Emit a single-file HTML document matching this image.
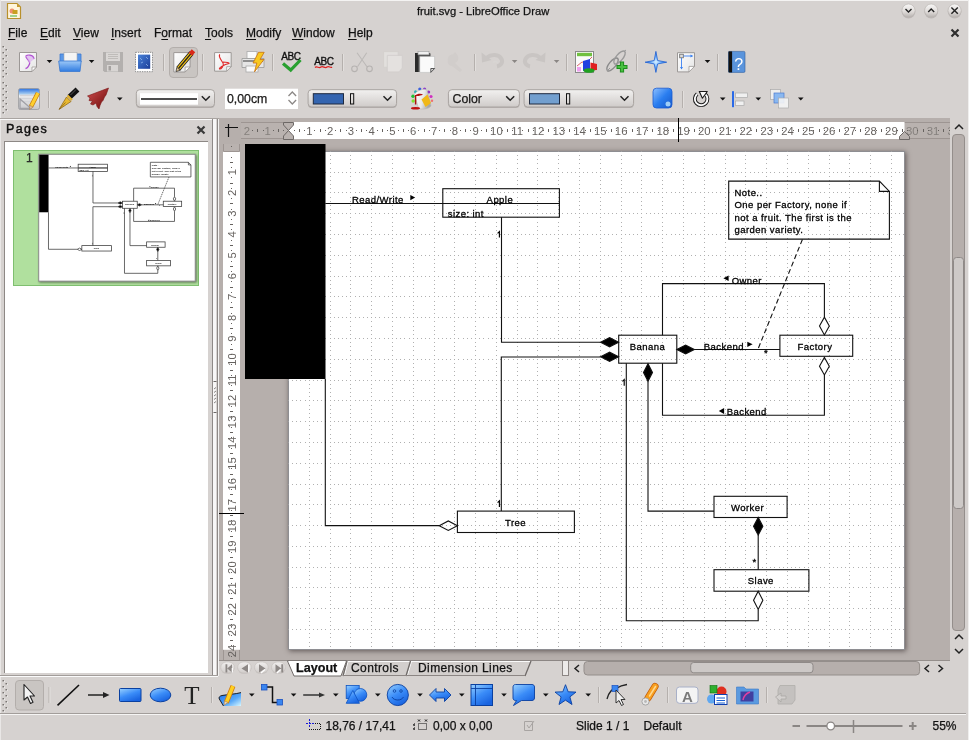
<!DOCTYPE html>
<html><head><meta charset="utf-8">
<style>
*{box-sizing:border-box;margin:0;padding:0}
html,body{width:969px;height:740px;overflow:hidden;background:#d6d2d0;font-family:"Liberation Sans",sans-serif;color:#111}
.a{position:absolute}
.t{position:absolute;white-space:pre;font-size:12px;line-height:14px;-webkit-text-stroke:0.25px #111}
.u{text-decoration:underline;text-underline-offset:2px}
svg{position:absolute;overflow:visible}
.dl{stroke-width:var(--sw,1.1px);stroke:var(--sc,#111)}
.dt{fill-opacity:var(--to,1)}
</style></head><body><div style="position:absolute;left:0;top:0;width:969px;height:740px;will-change:transform">

<div class="a" style="left:0;top:0;width:969px;height:1px;background:#f4f3f2"></div>
<div class="a" style="left:968px;top:0;width:1px;height:740px;background:#f0efee"></div>
<div class="a" style="left:0;top:0;width:1px;height:740px;background:#e9e7e6"></div>
<div class="t" style="left:417px;top:4px;font-size:11.2px">fruit.svg - LibreOffice Draw</div>
<div class="t" style="left:8px;top:26px"><span class="u">F</span>ile</div>
<div class="t" style="left:40px;top:26px"><span class="u">E</span>dit</div>
<div class="t" style="left:73px;top:26px"><span class="u">V</span>iew</div>
<div class="t" style="left:111px;top:26px"><span class="u">I</span>nsert</div>
<div class="t" style="left:154px;top:26px">F<span class="u">o</span>rmat</div>
<div class="t" style="left:205px;top:26px"><span class="u">T</span>ools</div>
<div class="t" style="left:246px;top:26px"><span class="u">M</span>odify</div>
<div class="t" style="left:292px;top:26px"><span class="u">W</span>indow</div>
<div class="t" style="left:348px;top:26px"><span class="u">H</span>elp</div>
<div class="a" style="left:0;top:118px;width:219px;height:1px;background:#a9a4a1"></div>
<div class="a" style="left:0;top:119px;width:212px;height:1px;background:#fbfbfb"></div>
<div class="t" style="left:6px;top:122px;font-size:12.5px;letter-spacing:1.3px;-webkit-text-stroke:0.45px #111">Pages</div>
<div class="a" style="left:4px;top:141px;width:204px;height:532px;background:#fff;border-top:1px solid #8d8885;border-left:1px solid #8d8885"></div>
<div class="a" style="left:13px;top:150px;width:186px;height:136px;background:#b0e09e;border:1px solid #7fbf70"></div>
<div class="t" style="left:26px;top:151px;font-size:12px;color:#333">1</div>
<div class="a" style="left:212px;top:119px;width:1px;height:557px;background:#8e8987"></div>
<div class="a" style="left:213px;top:119px;width:3px;height:557px;background:#f8f7f7"></div>
<div class="a" style="left:217px;top:119px;width:1px;height:557px;background:#8e8987"></div>
<div class="a" style="left:218px;top:119px;width:1px;height:557px;background:#f3f2f1"></div>
<div class="a" style="left:219px;top:118px;width:731px;height:542px;background:#b6afac"></div>
<div class="a" style="left:288.0px;top:150.9px;width:617.0px;height:499.4px;background:#fff;border:1px solid #8e8e92;box-shadow:1px 1px 5px rgba(40,30,30,.6)"></div>
<svg class="a" style="left:0;top:0" width="969" height="740" viewBox="0 0 969 740">
<defs><clipPath id="pg"><rect x="288.5" y="151.4" width="616.0" height="498.4"/></clipPath></defs>
<path clip-path="url(#pg)" d="M309.5 150.9V649.8 M330.5 150.9V649.8 M350.5 150.9V649.8 M371.5 150.9V649.8 M392.5 150.9V649.8 M413.5 150.9V649.8 M434.5 150.9V649.8 M454.5 150.9V649.8 M475.5 150.9V649.8 M496.5 150.9V649.8 M517.5 150.9V649.8 M537.5 150.9V649.8 M558.5 150.9V649.8 M579.5 150.9V649.8 M600.5 150.9V649.8 M621.5 150.9V649.8 M641.5 150.9V649.8 M662.5 150.9V649.8 M683.5 150.9V649.8 M704.5 150.9V649.8 M725.5 150.9V649.8 M745.5 150.9V649.8 M766.5 150.9V649.8 M787.5 150.9V649.8 M808.5 150.9V649.8 M829.5 150.9V649.8 M849.5 150.9V649.8 M870.5 150.9V649.8 M891.5 150.9V649.8 M288.0 172.5H904.5 M288.0 192.5H904.5 M288.0 213.5H904.5 M288.0 234.5H904.5 M288.0 255.5H904.5 M288.0 276.5H904.5 M288.0 296.5H904.5 M288.0 317.5H904.5 M288.0 338.5H904.5 M288.0 359.5H904.5 M288.0 380.5H904.5 M288.0 400.5H904.5 M288.0 421.5H904.5 M288.0 442.5H904.5 M288.0 463.5H904.5 M288.0 484.5H904.5 M288.0 504.5H904.5 M288.0 525.5H904.5 M288.0 546.5H904.5 M288.0 567.5H904.5 M288.0 587.5H904.5 M288.0 608.5H904.5 M288.0 629.5H904.5" stroke="#b0b0b0" stroke-width="1" stroke-dasharray="1 3.158" shape-rendering="crispEdges" fill="none"/>
</svg>
<svg class="a" style="left:0;top:0" width="969" height="740" viewBox="0 0 969 740">
<g id="diagram">
<rect x="245" y="144" width="80.5" height="235" fill="#000"/>
<path d="M325.3 203.5 L559.4 203.5" fill="none" stroke="#111" stroke-width="1.1" class="dl" />
<rect x="442.8" y="188.7" width="116.59999999999997" height="28.5" fill="none" stroke="#111" stroke-width="1.1" class="dl"/>
<path d="M442.8 203.5 L559.4 203.5" fill="none" stroke="#111" stroke-width="1.1" class="dl" />
<text x="352" y="203" font-family="Liberation Sans" font-size="9.5" letter-spacing="0.45" fill="#000" stroke="#000" stroke-width="0.3" class="dt" >Read/Write</text>
<path d="M410.3 195.0 L415.2 197.60000000000002 L410.3 200.20000000000002Z" fill="#000"/>
<text x="486.6" y="202.8" font-family="Liberation Sans" font-size="9.5" letter-spacing="0.45" fill="#000" stroke="#000" stroke-width="0.3" class="dt" >Apple</text>
<text x="447.7" y="217.2" font-family="Liberation Sans" font-size="9.5" letter-spacing="0.45" fill="#000" stroke="#000" stroke-width="0.3" class="dt" >size: int</text>
<path d="M501.5 217.2 L501.5 342.2 L600.6 342.2" fill="none" stroke="#111" stroke-width="1.1" class="dl" />
<path d="M497.6 233.3L499.4 231.6V237.6" fill="none" stroke="#000" stroke-width="1.15" class="dt"/>
<path d="M600.6 342.2 L609.6 337.59999999999997 L618.6 342.2 L609.6 346.8Z" fill="#000" stroke="#111" stroke-width="1" class="dl"/>
<path d="M501.3 511.1 L501.3 357 L600.6 357" fill="none" stroke="#111" stroke-width="1.1" class="dl" />
<path d="M600.6 356.8 L609.6 352.2 L618.6 356.8 L609.6 361.40000000000003Z" fill="#000" stroke="#111" stroke-width="1" class="dl"/>
<path d="M497.6 502.6L499.4 500.9V506.9" fill="none" stroke="#000" stroke-width="1.15" class="dt"/>
<path d="M325.3 378.9 L325.3 525.6 L439.2 525.6" fill="none" stroke="#111" stroke-width="1.1" class="dl" />
<path d="M439.2 525.7 L448.3 520.9000000000001 L457.40000000000003 525.7 L448.3 530.5Z" fill="none" stroke="#111" stroke-width="1" class="dl"/>
<rect x="457.4" y="511.1" width="117.0" height="21.399999999999977" fill="none" stroke="#111" stroke-width="1.1" class="dl"/>
<text x="505" y="525.5" font-family="Liberation Sans" font-size="9.5" letter-spacing="0.45" fill="#000" stroke="#000" stroke-width="0.3" class="dt" >Tree</text>
<path d="M662.5 335.2 L662.5 283.6 L824.4 283.6 L824.4 317.2" fill="none" stroke="#111" stroke-width="1.1" class="dl" />
<path d="M819.5 326.05 L824.4 317.2 L829.3 326.05 L824.4 334.90000000000003Z" fill="none" stroke="#111" stroke-width="1" class="dl"/>
<text x="731.7" y="283.6" font-family="Liberation Sans" font-size="9.5" letter-spacing="0.45" fill="#000" stroke="#000" stroke-width="0.3" class="dt" >Owner</text>
<path d="M728.5999999999999 275.6 L723.4 278.35 L728.5999999999999 281.09999999999997Z" fill="#000"/>
<path d="M824.4 374.9 L824.4 415.3 L662.5 415.3 L662.5 363.2" fill="none" stroke="#111" stroke-width="1.1" class="dl" />
<path d="M819.5 366.15 L824.4 357.4 L829.3 366.15 L824.4 374.9Z" fill="none" stroke="#111" stroke-width="1" class="dl"/>
<text x="726.7" y="415.3" font-family="Liberation Sans" font-size="9.5" letter-spacing="0.45" fill="#000" stroke="#000" stroke-width="0.3" class="dt" >Backend</text>
<path d="M724.0999999999999 408.1 L718.8000000000001 411.0 L724.0999999999999 413.9Z" fill="#000"/>
<path d="M694.4 349.5 L779.9 349.5" fill="none" stroke="#111" stroke-width="1.1" class="dl" />
<path d="M676.8000000000001 349.5 L685.6 345.0 L694.4 349.5 L685.6 354.0Z" fill="#000" stroke="#111" stroke-width="1" class="dl"/>
<text x="703.8" y="349.5" font-family="Liberation Sans" font-size="9.5" letter-spacing="0.45" fill="#000" stroke="#000" stroke-width="0.3" class="dt" >Backend</text>
<path d="M747.3000000000001 341.8 L752.6 344.35 L747.3000000000001 346.9Z" fill="#000"/>
<text x="764" y="356" font-family="Liberation Sans" font-size="9.5" letter-spacing="0.45" fill="#000" stroke="#000" stroke-width="0.3" class="dt" >*</text>
<path d="M728.7 181.1 L879.4 181.1 L889.4 191.4 L889.4 239.1 L728.7 239.1Z" fill="none" stroke="#111" stroke-width="1.1" class="dl"/>
<path d="M879.4 181.1 L879.4 191.4 L889.4 191.4" fill="none" stroke="#111" stroke-width="1.1" class="dl" />
<text x="734.5" y="196.0" font-family="Liberation Sans" font-size="9.5" letter-spacing="0.45" fill="#000" stroke="#000" stroke-width="0.3" class="dt" >Note..</text>
<text x="734.5" y="208.27" font-family="Liberation Sans" font-size="9.5" letter-spacing="0.45" fill="#000" stroke="#000" stroke-width="0.3" class="dt" >One per Factory, none if</text>
<text x="734.5" y="220.54" font-family="Liberation Sans" font-size="9.5" letter-spacing="0.45" fill="#000" stroke="#000" stroke-width="0.3" class="dt" >not a fruit. The first is the</text>
<text x="734.5" y="232.81" font-family="Liberation Sans" font-size="9.5" letter-spacing="0.45" fill="#000" stroke="#000" stroke-width="0.3" class="dt" >garden variety.</text>
<path d="M802.4 239.5 L757.7 349.8" fill="none" stroke="#111" stroke-width="1.1" class="dl" stroke-dasharray="5 3"/>
<rect x="618.7" y="335.2" width="58.09999999999991" height="28.0" fill="none" stroke="#111" stroke-width="1.1" class="dl"/>
<text x="629.8" y="350.2" font-family="Liberation Sans" font-size="9.5" letter-spacing="0.45" fill="#000" stroke="#000" stroke-width="0.3" class="dt" >Banana</text>
<rect x="779.9" y="335.2" width="72.80000000000007" height="21.100000000000023" fill="none" stroke="#111" stroke-width="1.1" class="dl"/>
<text x="797.6" y="349.6" font-family="Liberation Sans" font-size="9.5" letter-spacing="0.45" fill="#000" stroke="#000" stroke-width="0.3" class="dt" >Factory</text>
<path d="M626.3 363.2 L626.3 620.8 L758.2 620.8 L758.2 609.4" fill="none" stroke="#111" stroke-width="1.1" class="dl" />
<path d="M753.5500000000001 600.3 L758.2 591.1999999999999 L762.85 600.3 L758.2 609.4Z" fill="none" stroke="#111" stroke-width="1" class="dl"/>
<path d="M622.4 381.4L624.2 379.7V385.8" fill="none" stroke="#000" stroke-width="1.15" class="dt"/>
<path d="M643.5 372.45 L648 363.59999999999997 L652.5 372.45 L648 381.3Z" fill="#000" stroke="#111" stroke-width="1" class="dl"/>
<path d="M648 381.3 L648 511.1 L714 511.1" fill="none" stroke="#111" stroke-width="1.1" class="dl" />
<rect x="714" y="496.3" width="73.10000000000002" height="21.19999999999999" fill="none" stroke="#111" stroke-width="1.1" class="dl"/>
<text x="731" y="510.8" font-family="Liberation Sans" font-size="9.5" letter-spacing="0.45" fill="#000" stroke="#000" stroke-width="0.3" class="dt" >Worker</text>
<path d="M753.5500000000001 526.25 L758.2 517.5 L762.85 526.25 L758.2 535.0Z" fill="#000" stroke="#111" stroke-width="1" class="dl"/>
<path d="M758.2 535 L758.2 569.7" fill="none" stroke="#111" stroke-width="1.1" class="dl" />
<text x="752.5" y="564.5" font-family="Liberation Sans" font-size="9.5" letter-spacing="0.45" fill="#000" stroke="#000" stroke-width="0.3" class="dt" >*</text>
<rect x="714" y="569.7" width="94.89999999999998" height="21.5" fill="none" stroke="#111" stroke-width="1.1" class="dl"/>
<text x="747.8" y="584" font-family="Liberation Sans" font-size="9.5" letter-spacing="0.45" fill="#000" stroke="#000" stroke-width="0.3" class="dt" >Slave</text>
</g></svg>
<svg class="a" style="left:0;top:0" width="969" height="740" viewBox="0 0 969 740">
<defs><clipPath id="rt"><rect x="241" y="118" width="709" height="24"/></clipPath><clipPath id="rl"><rect x="219" y="144" width="24" height="516"/></clipPath></defs>
<g clip-path="url(#rt)">
<rect x="241" y="122" width="709" height="17" fill="#b9b2af"/>
<path d="M241 122.5H950M241 138.5H950" stroke="#9d9592" stroke-width="1"/>
<rect x="288.5" y="122" width="616.0" height="17" fill="#fff"/>
<text x="226.13" y="134.7" text-anchor="middle" font-family="Liberation Sans" font-size="11.3" fill="#85807d">3</text>
<text x="246.92" y="134.7" text-anchor="middle" font-family="Liberation Sans" font-size="11.3" fill="#85807d">2</text>
<text x="267.71" y="134.7" text-anchor="middle" font-family="Liberation Sans" font-size="11.3" fill="#85807d">1</text>
<text x="309.29" y="134.7" text-anchor="middle" font-family="Liberation Sans" font-size="11.3" fill="#66625f">1</text>
<text x="330.08" y="134.7" text-anchor="middle" font-family="Liberation Sans" font-size="11.3" fill="#66625f">2</text>
<text x="350.87" y="134.7" text-anchor="middle" font-family="Liberation Sans" font-size="11.3" fill="#66625f">3</text>
<text x="371.66" y="134.7" text-anchor="middle" font-family="Liberation Sans" font-size="11.3" fill="#66625f">4</text>
<text x="392.45" y="134.7" text-anchor="middle" font-family="Liberation Sans" font-size="11.3" fill="#66625f">5</text>
<text x="413.24" y="134.7" text-anchor="middle" font-family="Liberation Sans" font-size="11.3" fill="#66625f">6</text>
<text x="434.03" y="134.7" text-anchor="middle" font-family="Liberation Sans" font-size="11.3" fill="#66625f">7</text>
<text x="454.82" y="134.7" text-anchor="middle" font-family="Liberation Sans" font-size="11.3" fill="#66625f">8</text>
<text x="475.61" y="134.7" text-anchor="middle" font-family="Liberation Sans" font-size="11.3" fill="#66625f">9</text>
<text x="496.40" y="134.7" text-anchor="middle" font-family="Liberation Sans" font-size="11.3" fill="#66625f">10</text>
<text x="517.19" y="134.7" text-anchor="middle" font-family="Liberation Sans" font-size="11.3" fill="#66625f">11</text>
<text x="537.98" y="134.7" text-anchor="middle" font-family="Liberation Sans" font-size="11.3" fill="#66625f">12</text>
<text x="558.77" y="134.7" text-anchor="middle" font-family="Liberation Sans" font-size="11.3" fill="#66625f">13</text>
<text x="579.56" y="134.7" text-anchor="middle" font-family="Liberation Sans" font-size="11.3" fill="#66625f">14</text>
<text x="600.35" y="134.7" text-anchor="middle" font-family="Liberation Sans" font-size="11.3" fill="#66625f">15</text>
<text x="621.14" y="134.7" text-anchor="middle" font-family="Liberation Sans" font-size="11.3" fill="#66625f">16</text>
<text x="641.93" y="134.7" text-anchor="middle" font-family="Liberation Sans" font-size="11.3" fill="#66625f">17</text>
<text x="662.72" y="134.7" text-anchor="middle" font-family="Liberation Sans" font-size="11.3" fill="#66625f">18</text>
<text x="683.51" y="134.7" text-anchor="middle" font-family="Liberation Sans" font-size="11.3" fill="#66625f">19</text>
<text x="704.30" y="134.7" text-anchor="middle" font-family="Liberation Sans" font-size="11.3" fill="#66625f">20</text>
<text x="725.09" y="134.7" text-anchor="middle" font-family="Liberation Sans" font-size="11.3" fill="#66625f">21</text>
<text x="745.88" y="134.7" text-anchor="middle" font-family="Liberation Sans" font-size="11.3" fill="#66625f">22</text>
<text x="766.67" y="134.7" text-anchor="middle" font-family="Liberation Sans" font-size="11.3" fill="#66625f">23</text>
<text x="787.46" y="134.7" text-anchor="middle" font-family="Liberation Sans" font-size="11.3" fill="#66625f">24</text>
<text x="808.25" y="134.7" text-anchor="middle" font-family="Liberation Sans" font-size="11.3" fill="#66625f">25</text>
<text x="829.04" y="134.7" text-anchor="middle" font-family="Liberation Sans" font-size="11.3" fill="#66625f">26</text>
<text x="849.83" y="134.7" text-anchor="middle" font-family="Liberation Sans" font-size="11.3" fill="#66625f">27</text>
<text x="870.62" y="134.7" text-anchor="middle" font-family="Liberation Sans" font-size="11.3" fill="#66625f">28</text>
<text x="891.41" y="134.7" text-anchor="middle" font-family="Liberation Sans" font-size="11.3" fill="#66625f">29</text>
<text x="912.20" y="134.7" text-anchor="middle" font-family="Liberation Sans" font-size="11.3" fill="#85807d">30</text>
<text x="932.99" y="134.7" text-anchor="middle" font-family="Liberation Sans" font-size="11.3" fill="#85807d">31</text>
<text x="953.78" y="134.7" text-anchor="middle" font-family="Liberation Sans" font-size="11.3" fill="#85807d">32</text>
<text x="974.57" y="134.7" text-anchor="middle" font-family="Liberation Sans" font-size="11.3" fill="#85807d">33</text>
<path d="M237.5 128.5V131.5 M257.5 128.5V131.5 M252.5 129.5V130.5 M263.5 129.5V130.5 M278.5 128.5V131.5 M273.5 129.5V130.5 M283.5 129.5V130.5 M299.5 128.5V131.5 M294.5 129.5V130.5 M304.5 129.5V130.5 M320.5 128.5V131.5 M314.5 129.5V130.5 M325.5 129.5V130.5 M340.5 128.5V131.5 M335.5 129.5V130.5 M346.5 129.5V130.5 M361.5 128.5V131.5 M356.5 129.5V130.5 M366.5 129.5V130.5 M382.5 128.5V131.5 M377.5 129.5V130.5 M387.5 129.5V130.5 M403.5 128.5V131.5 M398.5 129.5V130.5 M408.5 129.5V130.5 M424.5 128.5V131.5 M418.5 129.5V130.5 M429.5 129.5V130.5 M444.5 128.5V131.5 M439.5 129.5V130.5 M450.5 129.5V130.5 M465.5 128.5V131.5 M460.5 129.5V130.5 M470.5 129.5V130.5 M486.5 128.5V131.5 M481.5 129.5V130.5 M491.5 129.5V130.5 M507.5 128.5V131.5 M502.5 129.5V130.5 M512.5 129.5V130.5 M528.5 128.5V131.5 M522.5 129.5V130.5 M533.5 129.5V130.5 M548.5 128.5V131.5 M543.5 129.5V130.5 M554.5 129.5V130.5 M569.5 128.5V131.5 M564.5 129.5V130.5 M574.5 129.5V130.5 M590.5 128.5V131.5 M585.5 129.5V130.5 M595.5 129.5V130.5 M611.5 128.5V131.5 M606.5 129.5V130.5 M616.5 129.5V130.5 M632.5 128.5V131.5 M626.5 129.5V130.5 M637.5 129.5V130.5 M652.5 128.5V131.5 M647.5 129.5V130.5 M658.5 129.5V130.5 M673.5 128.5V131.5 M668.5 129.5V130.5 M678.5 129.5V130.5 M694.5 128.5V131.5 M689.5 129.5V130.5 M699.5 129.5V130.5 M715.5 128.5V131.5 M709.5 129.5V130.5 M720.5 129.5V130.5 M735.5 128.5V131.5 M730.5 129.5V130.5 M741.5 129.5V130.5 M756.5 128.5V131.5 M751.5 129.5V130.5 M761.5 129.5V130.5 M777.5 128.5V131.5 M772.5 129.5V130.5 M782.5 129.5V130.5 M798.5 128.5V131.5 M793.5 129.5V130.5 M803.5 129.5V130.5 M819.5 128.5V131.5 M813.5 129.5V130.5 M824.5 129.5V130.5 M839.5 128.5V131.5 M834.5 129.5V130.5 M845.5 129.5V130.5 M860.5 128.5V131.5 M855.5 129.5V130.5 M865.5 129.5V130.5 M881.5 128.5V131.5 M876.5 129.5V130.5 M886.5 129.5V130.5 M902.5 128.5V131.5 M897.5 129.5V130.5 M907.5 129.5V130.5 M923.5 128.5V131.5 M917.5 129.5V130.5 M928.5 129.5V130.5 M943.5 128.5V131.5 M938.5 129.5V130.5 M949.5 129.5V130.5 M964.5 128.5V131.5 M959.5 129.5V130.5 M969.5 129.5V130.5 M985.5 128.5V131.5 M980.5 129.5V130.5 M990.5 129.5V130.5" stroke="#66625f" stroke-width="1" shape-rendering="crispEdges"/>
</g>
<path d="M283.5 122.5H293.5V125L288.5 130.5L293.5 136V139.5H283.5V136L288.5 130.5L283.5 125Z" fill="#b9b2af" stroke="#6d6866" stroke-width="1"/>
<path d="M904.5 131.5L909.5 136.5V139.5H899.5V136.5Z" fill="#b9b2af" stroke="#6d6866" stroke-width="1"/>
<path d="M678.5 118V142" stroke="#000" stroke-width="1"/>
<g clip-path="url(#rl)">
<rect x="223" y="144" width="17" height="516" fill="#b9b2af"/>
<path d="M223.5 144V660M239.5 144V660" stroke="#9d9592" stroke-width="1"/>
<rect x="223" y="151.4" width="17" height="498.4" fill="#fff"/>
<text transform="translate(235.6 130.38) rotate(-90)" x="0" y="0" text-anchor="middle" font-family="Liberation Sans" font-size="11.3" fill="#66625f">1</text>
<text transform="translate(235.6 172.02) rotate(-90)" x="0" y="0" text-anchor="middle" font-family="Liberation Sans" font-size="11.3" fill="#66625f">1</text>
<text transform="translate(235.6 192.84) rotate(-90)" x="0" y="0" text-anchor="middle" font-family="Liberation Sans" font-size="11.3" fill="#66625f">2</text>
<text transform="translate(235.6 213.66) rotate(-90)" x="0" y="0" text-anchor="middle" font-family="Liberation Sans" font-size="11.3" fill="#66625f">3</text>
<text transform="translate(235.6 234.48) rotate(-90)" x="0" y="0" text-anchor="middle" font-family="Liberation Sans" font-size="11.3" fill="#66625f">4</text>
<text transform="translate(235.6 255.30) rotate(-90)" x="0" y="0" text-anchor="middle" font-family="Liberation Sans" font-size="11.3" fill="#66625f">5</text>
<text transform="translate(235.6 276.12) rotate(-90)" x="0" y="0" text-anchor="middle" font-family="Liberation Sans" font-size="11.3" fill="#66625f">6</text>
<text transform="translate(235.6 296.94) rotate(-90)" x="0" y="0" text-anchor="middle" font-family="Liberation Sans" font-size="11.3" fill="#66625f">7</text>
<text transform="translate(235.6 317.76) rotate(-90)" x="0" y="0" text-anchor="middle" font-family="Liberation Sans" font-size="11.3" fill="#66625f">8</text>
<text transform="translate(235.6 338.58) rotate(-90)" x="0" y="0" text-anchor="middle" font-family="Liberation Sans" font-size="11.3" fill="#66625f">9</text>
<text transform="translate(235.6 359.40) rotate(-90)" x="0" y="0" text-anchor="middle" font-family="Liberation Sans" font-size="11.3" fill="#66625f">10</text>
<text transform="translate(235.6 380.22) rotate(-90)" x="0" y="0" text-anchor="middle" font-family="Liberation Sans" font-size="11.3" fill="#66625f">11</text>
<text transform="translate(235.6 401.04) rotate(-90)" x="0" y="0" text-anchor="middle" font-family="Liberation Sans" font-size="11.3" fill="#66625f">12</text>
<text transform="translate(235.6 421.86) rotate(-90)" x="0" y="0" text-anchor="middle" font-family="Liberation Sans" font-size="11.3" fill="#66625f">13</text>
<text transform="translate(235.6 442.68) rotate(-90)" x="0" y="0" text-anchor="middle" font-family="Liberation Sans" font-size="11.3" fill="#66625f">14</text>
<text transform="translate(235.6 463.50) rotate(-90)" x="0" y="0" text-anchor="middle" font-family="Liberation Sans" font-size="11.3" fill="#66625f">15</text>
<text transform="translate(235.6 484.32) rotate(-90)" x="0" y="0" text-anchor="middle" font-family="Liberation Sans" font-size="11.3" fill="#66625f">16</text>
<text transform="translate(235.6 505.14) rotate(-90)" x="0" y="0" text-anchor="middle" font-family="Liberation Sans" font-size="11.3" fill="#66625f">17</text>
<text transform="translate(235.6 525.96) rotate(-90)" x="0" y="0" text-anchor="middle" font-family="Liberation Sans" font-size="11.3" fill="#66625f">18</text>
<text transform="translate(235.6 546.78) rotate(-90)" x="0" y="0" text-anchor="middle" font-family="Liberation Sans" font-size="11.3" fill="#66625f">19</text>
<text transform="translate(235.6 567.60) rotate(-90)" x="0" y="0" text-anchor="middle" font-family="Liberation Sans" font-size="11.3" fill="#66625f">20</text>
<text transform="translate(235.6 588.42) rotate(-90)" x="0" y="0" text-anchor="middle" font-family="Liberation Sans" font-size="11.3" fill="#66625f">21</text>
<text transform="translate(235.6 609.24) rotate(-90)" x="0" y="0" text-anchor="middle" font-family="Liberation Sans" font-size="11.3" fill="#66625f">22</text>
<text transform="translate(235.6 630.06) rotate(-90)" x="0" y="0" text-anchor="middle" font-family="Liberation Sans" font-size="11.3" fill="#66625f">23</text>
<text transform="translate(235.6 650.88) rotate(-90)" x="0" y="0" text-anchor="middle" font-family="Liberation Sans" font-size="11.3" fill="#66625f">24</text>
<text transform="translate(235.6 671.70) rotate(-90)" x="0" y="0" text-anchor="middle" font-family="Liberation Sans" font-size="11.3" fill="#66625f">25</text>
<text transform="translate(235.6 692.52) rotate(-90)" x="0" y="0" text-anchor="middle" font-family="Liberation Sans" font-size="11.3" fill="#66625f">26</text>
<path d="M230 141.5H233 M231 136.5H232 M231 146.5H232 M230 162.5H233 M231 157.5H232 M231 167.5H232 M230 183.5H233 M231 177.5H232 M231 188.5H232 M230 203.5H233 M231 198.5H232 M231 209.5H232 M230 224.5H233 M231 219.5H232 M231 229.5H232 M230 245.5H233 M231 240.5H232 M231 250.5H232 M230 266.5H233 M231 261.5H232 M231 271.5H232 M230 287.5H233 M231 281.5H232 M231 292.5H232 M230 307.5H233 M231 302.5H232 M231 313.5H232 M230 328.5H233 M231 323.5H232 M231 333.5H232 M230 349.5H233 M231 344.5H232 M231 354.5H232 M230 370.5H233 M231 364.5H232 M231 375.5H232 M230 390.5H233 M231 385.5H232 M231 396.5H232 M230 411.5H233 M231 406.5H232 M231 416.5H232 M230 432.5H233 M231 427.5H232 M231 437.5H232 M230 453.5H233 M231 448.5H232 M231 458.5H232 M230 474.5H233 M231 468.5H232 M231 479.5H232 M230 494.5H233 M231 489.5H232 M231 500.5H232 M230 515.5H233 M231 510.5H232 M231 520.5H232 M230 536.5H233 M231 531.5H232 M231 541.5H232 M230 557.5H233 M231 552.5H232 M231 562.5H232 M230 578.5H233 M231 572.5H232 M231 583.5H232 M230 598.5H233 M231 593.5H232 M231 604.5H232 M230 619.5H233 M231 614.5H232 M231 624.5H232 M230 640.5H233 M231 635.5H232 M231 645.5H232 M230 661.5H233 M231 656.5H232 M231 666.5H232 M230 682.5H233 M231 676.5H232 M231 687.5H232 M230 702.5H233 M231 697.5H232 M231 708.5H232" stroke="#66625f" stroke-width="1" shape-rendering="crispEdges"/>
</g>
<path d="M223.5 144V151.5H239.5V144" fill="none" stroke="#9d9592" stroke-width="1"/>
<path d="M219 513.5H244" stroke="#000" stroke-width="1"/>
</svg>
<svg class="a" style="left:0;top:0" width="969" height="740" viewBox="0 0 969 740">
<rect x="950" y="118" width="17" height="542" fill="#d6d2d0"/>
<path d="M955 129L959 125L963 129" fill="none" stroke="#222" stroke-width="1.5"/>
<rect x="952.5" y="134.5" width="12" height="496" rx="3.5" fill="#b6afac" stroke="#948e8b" stroke-width="1"/>
<rect x="953.5" y="257.5" width="10" height="251" rx="3" fill="#cdc9c7" stroke="#8f8a88" stroke-width="1"/>
<path d="M955 639L959 635L963 639M955 649L959 653L963 649" fill="none" stroke="#222" stroke-width="1.5"/>
<path d="M219 660.5H950" stroke="#958f8c" stroke-width="1"/>
<defs><linearGradient id="gnav" x1="0" y1="0" x2="0" y2="1"><stop offset="0" stop-color="#f0eeed"/><stop offset="1" stop-color="#d2cecc"/></linearGradient></defs>
<rect x="220.8" y="662.6" width="13.6" height="11.2" rx="5.5" fill="#bdb8b5" opacity=".6"/>
<rect x="220.8" y="662" width="13.6" height="10.9" rx="5.5" fill="url(#gnav)" stroke="#c4bfbc" stroke-width="0.6"/>
<rect x="237.7" y="662.6" width="13.6" height="11.2" rx="5.5" fill="#bdb8b5" opacity=".6"/>
<rect x="237.7" y="662" width="13.6" height="10.9" rx="5.5" fill="url(#gnav)" stroke="#c4bfbc" stroke-width="0.6"/>
<rect x="254.6" y="662.6" width="13.6" height="11.2" rx="5.5" fill="#bdb8b5" opacity=".6"/>
<rect x="254.6" y="662" width="13.6" height="10.9" rx="5.5" fill="url(#gnav)" stroke="#c4bfbc" stroke-width="0.6"/>
<rect x="271.6" y="662.6" width="13.6" height="11.2" rx="5.5" fill="#bdb8b5" opacity=".6"/>
<rect x="271.6" y="662" width="13.6" height="10.9" rx="5.5" fill="url(#gnav)" stroke="#c4bfbc" stroke-width="0.6"/>
<path d="M225.5 664.3H227.3V672.5H225.5Z M232 664.3L227.3 668.4L232 672.5Z" fill="#8d8886"/><path d="M232.3 668V672.5" stroke="#fff" stroke-width="1.2"/>
<path d="M248 664.3L241.5 668.4L248 672.5Z" fill="#8d8886"/><path d="M248.8 665V672.5" stroke="#fff" stroke-width="1.2"/>
<path d="M259 664.3L265.5 668.4L259 672.5Z" fill="#8d8886"/><path d="M265 669.5L261 673" stroke="#fff" stroke-width="1.2"/>
<path d="M275.5 664.3L281.3 668.4L275.5 672.5Z M281.3 664.3H283.2V672.5H281.3Z" fill="#8d8886"/><path d="M280.5 669.5L277 673" stroke="#fff" stroke-width="1.2"/>
<path d="M287 660.5H570" stroke="#8c8684" stroke-width="1"/>
<path d="M343.5 661L347 661L410.5 661L406 676L343 676Z" fill="#d3cfcd"/>
<path d="M406 661L531 661L525 676L402 676Z" fill="#d3cfcd"/>
<path d="M347.5 661.5H410M410.5 661.5H531" stroke="#fafafa" stroke-width="1"/>
<path d="M348 661.5L344.5 675M411.5 661.5L407.5 675" stroke="#fafafa" stroke-width="1"/><path d="M347 661L343 676M410.5 661L406 676M531 661L525 676" stroke="#6f6a68" stroke-width="1.3"/>
<path d="M343 675.5H525" stroke="#8c8684" stroke-width="1"/>
<path d="M287.5 661L294 676H341L346.5 661Z" fill="#fff" stroke="#6f6a68" stroke-width="1"/>
<path d="M288.5 661.6H345.5" stroke="#fff" stroke-width="1.2"/>
<rect x="562.5" y="660.5" width="6" height="15" fill="#eceae9" stroke="#8c8684" stroke-width="1"/>
<path d="M579 665L575 668.5L579 672" fill="none" stroke="#222" stroke-width="1.5"/>
<rect x="584" y="661.5" width="335.6" height="13.5" rx="3.5" fill="#b6afac" stroke="#948e8b" stroke-width="1"/>
<rect x="690.7" y="662.5" width="122.3" height="10.3" rx="3" fill="#cdc9c7" stroke="#8f8a88" stroke-width="1"/>
<path d="M929 665L925 668.5L929 672M938.5 665L942.5 668.5L938.5 672" fill="none" stroke="#222" stroke-width="1.5"/>
<path d="M0 675.5H218" stroke="#a29d9a" stroke-width="1"/>
<path d="M0 676.5H218" stroke="#fbfbfb" stroke-width="1"/>
<path d="M0 713.5H966" stroke="#a29d9a" stroke-width="1"/><path d="M0 714.5H966" stroke="#f6f5f4" stroke-width="1"/>
</svg>
<div class="t" style="left:296px;top:661px;font-size:12.6px;font-weight:bold;color:#111">Layout</div>
<div class="t" style="left:351px;top:661px;font-size:12px;letter-spacing:0.4px">Controls</div>
<div class="t" style="left:418px;top:661px;font-size:12px;letter-spacing:0.4px">Dimension Lines</div>
<div class="t" style="left:325.5px;top:719px">18,76 / 17,41</div>
<div class="t" style="left:433px;top:719px">0,00 x 0,00</div>
<div class="t" style="left:576px;top:719px">Slide 1 / 1</div>
<div class="t" style="left:643.5px;top:719px">Default</div>
<div class="t" style="left:932.5px;top:719px">55%</div>
<svg class="a" style="left:0;top:0" width="969" height="740" viewBox="0 0 969 740">
<path d="M309.5 719V728M306 723.5H314" stroke="#1a1ad8" stroke-width="1" stroke-dasharray="2 1"/>
<path d="M315 723.5H320.5V729.5H309" fill="none" stroke="#111" stroke-width="1" stroke-dasharray="1 1"/>
<path d="M418.5 723.5H426.5V729.5H418.5Z" fill="none" stroke="#111" stroke-width="1" stroke-dasharray="1 1"/>
<path d="M418 719.5L420 721.5M420 719.5L418 721.5M425 719.5L427 721.5M427 719.5L425 721.5M414.5 723.5L413.5 725L414.5 726M414.5 727.5L413.5 729L414.5 730" stroke="#111" stroke-width="1"/>
<path d="M524.5 721.5H532.5V730.5H524.5Z" fill="none" stroke="#a8a4a2" stroke-width="1"/><path d="M527 725L529 728L534 721" fill="none" stroke="#a8a4a2" stroke-width="1"/>
<path d="M792.5 726H800" stroke="#8a8684" stroke-width="2"/>
<path d="M806.5 726H902.5" stroke="#8a8684" stroke-width="2"/>
<path d="M853.5 720V733" stroke="#8a8684" stroke-width="1.5"/>
<circle cx="830.7" cy="726" r="3.8" fill="#fff" stroke="#8a8684" stroke-width="1.3"/>
<path d="M909 726H916.5M912.7 722V730" stroke="#8a8684" stroke-width="2"/>
</svg>
<svg class="a" style="left:0;top:0" width="969" height="740" viewBox="0 0 969 740">
<defs><clipPath id="tc"><rect x="39.2" y="154.8" width="155.54" height="125.84599999999999"/></clipPath></defs>
<rect x="38.7" y="154.3" width="156.54" height="126.84599999999999" fill="#fff" stroke="#8a8a8a" stroke-width="1" style="filter:drop-shadow(1px 1px 1px rgba(0,0,0,.45))"/>
<g clip-path="url(#tc)"><g transform="translate(39.2 154.8) scale(0.2525) translate(-288.5 -151.4)" ><use href="#diagram" style="--sw:3.0px;--to:0.6;--sc:#3a3a3a"/></g></g>
</svg>
<svg class="a" style="left:0;top:0" width="969" height="740" viewBox="0 0 969 740">
<defs>
<linearGradient id="gpage" x1="0" y1="0" x2="1" y2="1"><stop offset="0" stop-color="#fff"/><stop offset="1" stop-color="#e4e4e4"/></linearGradient>
<linearGradient id="gblue" x1="0" y1="0" x2="0" y2="1"><stop offset="0" stop-color="#9cc8f8"/><stop offset="1" stop-color="#2f7be0"/></linearGradient>
<linearGradient id="gblue2" x1="0" y1="0" x2="1" y2="1"><stop offset="0" stop-color="#8ec0ff"/><stop offset="0.5" stop-color="#2a7ef0"/><stop offset="1" stop-color="#1657c8"/></linearGradient>
<linearGradient id="gstamp" x1="0" y1="0" x2="1" y2="1"><stop offset="0" stop-color="#4a82d8"/><stop offset="1" stop-color="#1a3c98"/></linearGradient>
<linearGradient id="gbtn" x1="0" y1="0" x2="0" y2="1"><stop offset="0" stop-color="#f2f1f0"/><stop offset="1" stop-color="#cfcbc9"/></linearGradient>
<linearGradient id="gwin" x1="0" y1="0" x2="0" y2="1"><stop offset="0" stop-color="#f8f7f6"/><stop offset="0.6" stop-color="#dedad8"/><stop offset="1" stop-color="#b8b3b0"/></linearGradient>
</defs>
<path d="M7.5 3.5H17L20.5 7V18.5H7.5Z" fill="#fff5dc" stroke="#b8902c" stroke-width="1.2"/>
<path d="M17 3.5V7H20.5" fill="#c89a30"/>
<circle cx="12" cy="11" r="2.5" fill="#f09070"/><rect x="12.5" y="10" width="5" height="4" fill="#c8a020"/><path d="M10 16H17" stroke="#40b040" stroke-width="1"/>
<circle cx="908.5" cy="11.6" r="6.8" fill="#a8a3a0" opacity=".55"/><circle cx="908.5" cy="10.6" r="6.6" fill="url(#gwin)" stroke="#b8b3b0" stroke-width="0.6"/>
<path d="M905.5 9.1L908.5 12.1L911.5 9.1" fill="none" stroke="#222" stroke-width="1.4"/>
<circle cx="931.2" cy="11.6" r="6.8" fill="#a8a3a0" opacity=".55"/><circle cx="931.2" cy="10.6" r="6.6" fill="url(#gwin)" stroke="#b8b3b0" stroke-width="0.6"/>
<path d="M928.2 12.1L931.2 9.1L934.2 12.1" fill="none" stroke="#222" stroke-width="1.4"/>
<circle cx="954.6" cy="11.6" r="6.8" fill="#a8a3a0" opacity=".55"/><circle cx="954.6" cy="10.6" r="6.6" fill="url(#gwin)" stroke="#b8b3b0" stroke-width="0.6"/>
<path d="M951.4 7.3999999999999995L957.8000000000001 13.8M957.8000000000001 7.3999999999999995L951.4 13.8" fill="none" stroke="#222" stroke-width="1.4"/>
<path d="M951.5 29.5L958.5 36.5M958.5 29.5L951.5 36.5" stroke="#2e2e2e" stroke-width="2.2"/>
<rect x="3.3" y="46.8" width="1.3" height="1.3" fill="#fbfbfb"/><rect x="2.5" y="46" width="1.5" height="1.5" fill="#77726f"/><rect x="6.3" y="49.8" width="1.3" height="1.3" fill="#fbfbfb"/><rect x="5.5" y="49" width="1.5" height="1.5" fill="#77726f"/><rect x="3.3" y="52.8" width="1.3" height="1.3" fill="#fbfbfb"/><rect x="2.5" y="52" width="1.5" height="1.5" fill="#77726f"/><rect x="6.3" y="55.8" width="1.3" height="1.3" fill="#fbfbfb"/><rect x="5.5" y="55" width="1.5" height="1.5" fill="#77726f"/><rect x="3.3" y="58.8" width="1.3" height="1.3" fill="#fbfbfb"/><rect x="2.5" y="58" width="1.5" height="1.5" fill="#77726f"/><rect x="6.3" y="61.8" width="1.3" height="1.3" fill="#fbfbfb"/><rect x="5.5" y="61" width="1.5" height="1.5" fill="#77726f"/><rect x="3.3" y="64.8" width="1.3" height="1.3" fill="#fbfbfb"/><rect x="2.5" y="64" width="1.5" height="1.5" fill="#77726f"/><rect x="6.3" y="67.8" width="1.3" height="1.3" fill="#fbfbfb"/><rect x="5.5" y="67" width="1.5" height="1.5" fill="#77726f"/><rect x="3.3" y="70.8" width="1.3" height="1.3" fill="#fbfbfb"/><rect x="2.5" y="70" width="1.5" height="1.5" fill="#77726f"/><rect x="6.3" y="73.8" width="1.3" height="1.3" fill="#fbfbfb"/><rect x="5.5" y="73" width="1.5" height="1.5" fill="#77726f"/><rect x="3.3" y="76.8" width="1.3" height="1.3" fill="#fbfbfb"/><rect x="2.5" y="76" width="1.5" height="1.5" fill="#77726f"/>
<path d="M19.5 52.5H36.5V67L32 71.5H19.5Z" fill="url(#gpage)" stroke="#9c9896" stroke-width="1"/><path d="M36.5 67L32 67L32 71.5Z" fill="#fff" stroke="#9c9896" stroke-width="0.8"/>
<path d="M34 59C33 54 27 55 26 56C25 58 31 61 29.5 64C28.5 66.5 26.5 68.5 25.5 68.5" fill="none" stroke="#b050d0" stroke-width="1.3"/><path d="M26 56C28 55 33 55 34 59L29.5 63Z" fill="#dcb0f0" opacity=".7"/>
<path d="M46.7 60H52.300000000000004L49.5 63Z" fill="#111"/>
<path d="M60 54H81V62H60Z" fill="#5a98e8" stroke="#3c7ad0" stroke-width="0.8"/>
<rect x="64" y="52.5" width="13" height="9" fill="#f4f4f4" stroke="#aaa" stroke-width="0.6"/>
<path d="M58.7 61H81.2L80 71.5H60Z" fill="url(#gblue)" stroke="#3a78d0" stroke-width="0.8"/>
<path d="M88.8 60H94.39999999999999L91.6 63Z" fill="#111"/>
<path d="M103 52H123V72H104.5L103 70.5Z" fill="#b3b0ae"/><rect x="106" y="52.5" width="14" height="8.5" fill="#dad7d5"/><path d="M108 54.5H118M108 56.5H118M108 58.5H118" stroke="#b3b0ae" stroke-width="0.7"/><rect x="107" y="65" width="11" height="6.5" fill="#d8d5d3"/><rect x="108.5" y="66" width="2.5" height="4.5" fill="#a5a2a0"/>
<rect x="135.5" y="52.3" width="17" height="19.4" fill="#fff" stroke="#8a8a8a" stroke-width="1" stroke-dasharray="1.4 1"/>
<rect x="138" y="54.6" width="12.2" height="14.2" fill="url(#gstamp)"/>
<path d="M140 58L142 60M146 57L148 59M141 63L143 62M146 64L148 66" stroke="#9cc0f0" stroke-width="0.7"/>
<path d="M163.5 54V71" stroke="#b5b0ad" stroke-width="1"/><path d="M164.5 54V71" stroke="#e2dfdd" stroke-width="1"/>
<rect x="169.5" y="47.5" width="28" height="30" rx="3.5" fill="#c9c5c2" stroke="#b3aeab" stroke-width="1"/>
<path d="M173.8 52.6H190.1V67.0L185.1 72.0H173.8Z" fill="url(#gpage)" stroke="#9c9896" stroke-width="1"/><path d="M190.1 67.0L185.1 67.0L185.1 72.0Z" fill="#fff" stroke="#9c9896" stroke-width="0.8"/>
<path d="M178.5 68.5L191.5 53" stroke="#1a1a1a" stroke-width="5.2"/><path d="M178.5 68.5L191.5 53" stroke="#f2c31a" stroke-width="3.6"/><path d="M178.5 68.5L191.5 53" stroke="#222" stroke-width="1.2"/><path d="M190.5 54.2L193.5 50.8" stroke="#d82818" stroke-width="4.6"/><path d="M176 71.5L176.8 67.3L180.3 70.3Z" fill="#e8c890" stroke="#333" stroke-width="0.8"/>
<path d="M202.5 54V71" stroke="#b5b0ad" stroke-width="1"/><path d="M203.5 54V71" stroke="#e2dfdd" stroke-width="1"/>
<path d="M214.6 52.6H231.2V66.7L226.7 71.2H214.6Z" fill="url(#gpage)" stroke="#9c9896" stroke-width="1"/><path d="M231.2 66.7L226.7 66.7L226.7 71.2Z" fill="#fff" stroke="#9c9896" stroke-width="0.8"/>
<path d="M220 54.5C218 55.5 221 60 223 63C224.5 65.5 221 69.5 219.5 69C218.5 68 224 64.5 229 63.5C229.5 63 226.5 62 223 62" fill="none" stroke="#e02828" stroke-width="1.1"/>
<rect x="247" y="51.5" width="10" height="7" fill="#fafafa" stroke="#aaa" stroke-width="0.8"/>
<path d="M242 58.5H264V67.5H242Z" fill="#e6e6e6" stroke="#999" stroke-width="0.8"/><path d="M243 61H263" stroke="#555" stroke-width="1.2"/>
<rect x="246" y="66" width="12" height="6" fill="#fafafa" stroke="#aaa" stroke-width="0.8"/>
<path d="M258.5 52.3H264.2L260 59.5H264L254.5 71.8L256.8 63H253L258.5 52.3Z" fill="#f8c820" stroke="#c87010" stroke-width="0.8" stroke-linejoin="round"/>
<path d="M272.5 54V71" stroke="#b5b0ad" stroke-width="1"/><path d="M273.5 54V71" stroke="#e2dfdd" stroke-width="1"/>
<text x="281.2" y="59.5" font-family="Liberation Sans" font-size="10" fill="#111" stroke="#111" stroke-width="0.35" letter-spacing="-0.4">ABC</text>
<path d="M283 63.5L290.7 70L300.5 60" fill="none" stroke="#28a030" stroke-width="3.2"/>
<text x="314.3" y="64.5" font-family="Liberation Sans" font-size="10" fill="#111" stroke="#111" stroke-width="0.35" letter-spacing="-0.4">ABC</text>
<path d="M315 67.5C317 65.5 319 69 321 67C323 65.5 325 69 327 67C329 65.5 330.5 68.5 332 67" fill="none" stroke="#e02020" stroke-width="1.2"/>
<path d="M342.5 54V71" stroke="#b5b0ad" stroke-width="1"/><path d="M343.5 54V71" stroke="#e2dfdd" stroke-width="1"/>
<path d="M357 52.8L367 66.7M366.7 52.8L357.5 66.7" stroke="#bcb9b7" stroke-width="1.1"/><circle cx="354.5" cy="68.8" r="2.8" fill="none" stroke="#b5b2b0" stroke-width="1.1"/><circle cx="369.5" cy="68.8" r="2.8" fill="none" stroke="#b5b2b0" stroke-width="1.1"/>
<rect x="383.7" y="51.7" width="14.4" height="15.5" fill="#e2dfdd" stroke="#d2cfcd" stroke-width="0.8"/>
<path d="M387.3 55.4H402.3V68L399 71.9H387.3Z" fill="#e4e1df" stroke="#d0cdcb" stroke-width="0.8"/>
<rect x="415" y="53" width="15.5" height="19" rx="1" fill="#4a4a4a"/><rect x="415" y="53" width="3" height="19" fill="#2a2a2a"/>
<rect x="418" y="51.3" width="11" height="3.5" fill="#f0f0f0" stroke="#999" stroke-width="0.6"/>
<path d="M419.8 56.4H434.6V68.5L430.8 72.4H419.8Z" fill="#fafafa" stroke="#bbb" stroke-width="0.6"/><path d="M434.6 68.5L430.8 68.5L430.8 72.4Z" fill="#ddd" stroke="#333" stroke-width="0.8"/>
<path d="M448 60C447 57 451 54 453 54.5L455 52L458 56C459 60 457 62 455 63L462 70L460 72L452 66C449 66 447 63 448 60Z" fill="#d0ccca" opacity=".9"/>
<path d="M474.5 54V71" stroke="#b5b0ad" stroke-width="1"/><path d="M475.5 54V71" stroke="#e2dfdd" stroke-width="1"/>
<path d="M487 57.5C491 54 499 54 501.5 59C503.5 63 500 66 497 66.5" fill="none" stroke="#c9c5c3" stroke-width="4"/><path d="M481.5 52.5L482 62.5L491.5 60Z" fill="#c9c5c3"/><path d="M493 62.5C494.5 61 497 61 497.5 63" fill="none" stroke="#d8d5d3" stroke-width="1.5"/>
<path d="M511.8 60.1H517.4L514.6 63.1Z" fill="#8a8684"/>
<path d="M540 57.5C536 54 528 54 525.5 59C523.5 63 527 66 530 66.5" fill="none" stroke="#c9c5c3" stroke-width="4"/><path d="M545.5 52.5L545 62.5L535.5 60Z" fill="#c9c5c3"/>
<path d="M553.8 60.1H559.4L556.5999999999999 63.1Z" fill="#8a8684"/>
<path d="M566.5 54V71" stroke="#b5b0ad" stroke-width="1"/><path d="M567.5 54V71" stroke="#e2dfdd" stroke-width="1"/>
<rect x="575.5" y="51.5" width="18" height="21" fill="#fafafa" stroke="#8a8a8a" stroke-width="1"/><rect x="577" y="52.8" width="15" height="3.4" fill="#70c040"/>
<path d="M577 66L582 62L586 63L592 57" fill="none" stroke="#d04040" stroke-width="0.8"/><rect x="577" y="67" width="4" height="4.5" fill="#f0a0f0"/>
<path d="M583 61L590 59V69L583 71Z" fill="#2040e0"/><path d="M590.5 62.5L597 64V70L590.5 70.5Z" fill="#e02020"/><ellipse cx="589" cy="70.5" rx="5.5" ry="2.3" fill="#20a020"/>
<ellipse cx="0" cy="0" rx="3.3" ry="8" transform="translate(612.5 64.5) rotate(40)" fill="none" stroke="#8a8a8a" stroke-width="1.4"/><ellipse cx="0" cy="0" rx="3.3" ry="8" transform="translate(619.5 57.5) rotate(40)" fill="none" stroke="#9a9a9a" stroke-width="1.4"/><path d="M607 71L610 68M624 51.5L626 50" stroke="#999" stroke-width="1"/>
<path d="M622 61.5V72.5M616.5 67H627.5" stroke="#1e8c1e" stroke-width="4.2"/><path d="M622 62.5V71.5M617.5 67H626.5" stroke="#48c040" stroke-width="2.2"/>
<path d="M636.5 54V71" stroke="#b5b0ad" stroke-width="1"/><path d="M637.5 54V71" stroke="#e2dfdd" stroke-width="1"/>
<defs><radialGradient id="gstar" cx="0.5" cy="0.5" r="0.5"><stop offset="0" stop-color="#d8f0ff"/><stop offset="0.5" stop-color="#6ab0ff"/><stop offset="1" stop-color="#2a70e8"/></radialGradient></defs><path d="M655.9 51.4L657.6 60.5L666.7 62.2L657.6 63.9L655.9 72.4L654.2 63.9L645.1 62.2L654.2 60.5Z" fill="url(#gstar)" stroke="#2060d0" stroke-width="0.8"/>
<path d="M677.5 52.7H694.5V66.4L689 71.9H677.5Z" fill="url(#gpage)" stroke="#9c9896" stroke-width="1"/><path d="M694.5 66.4L689 66.4L689 71.9Z" fill="#fff" stroke="#9c9896" stroke-width="0.8"/>
<rect x="679.7" y="54.2" width="3.6" height="3.6" fill="#ddd" stroke="#666" stroke-width="0.8"/><path d="M683.5 56H692.5M681.5 58V69" stroke="#3a80f0" stroke-width="0.9"/><path d="M693 56L690.5 54.5V57.5Z M681.5 69.5L680 67H683Z" fill="#3a80f0"/>
<path d="M704.7 59.9H710.3000000000001L707.5 62.9Z" fill="#111"/>
<path d="M717.5 54V71" stroke="#b5b0ad" stroke-width="1"/><path d="M718.5 54V71" stroke="#e2dfdd" stroke-width="1"/>
<rect x="728.5" y="51.4" width="16.5" height="21" rx="1.2" fill="#5a94dc" stroke="#3060a0" stroke-width="0.6"/><rect x="728.5" y="51.4" width="3.6" height="21" fill="#111"/>
<text x="738.8" y="70" text-anchor="middle" font-family="Liberation Sans" font-size="16" fill="#fff">?</text>
<rect x="3.3" y="82.8" width="1.3" height="1.3" fill="#fbfbfb"/><rect x="2.5" y="82" width="1.5" height="1.5" fill="#77726f"/><rect x="6.3" y="85.8" width="1.3" height="1.3" fill="#fbfbfb"/><rect x="5.5" y="85" width="1.5" height="1.5" fill="#77726f"/><rect x="3.3" y="88.8" width="1.3" height="1.3" fill="#fbfbfb"/><rect x="2.5" y="88" width="1.5" height="1.5" fill="#77726f"/><rect x="6.3" y="91.8" width="1.3" height="1.3" fill="#fbfbfb"/><rect x="5.5" y="91" width="1.5" height="1.5" fill="#77726f"/><rect x="3.3" y="94.8" width="1.3" height="1.3" fill="#fbfbfb"/><rect x="2.5" y="94" width="1.5" height="1.5" fill="#77726f"/><rect x="6.3" y="97.8" width="1.3" height="1.3" fill="#fbfbfb"/><rect x="5.5" y="97" width="1.5" height="1.5" fill="#77726f"/><rect x="3.3" y="100.8" width="1.3" height="1.3" fill="#fbfbfb"/><rect x="2.5" y="100" width="1.5" height="1.5" fill="#77726f"/><rect x="6.3" y="103.8" width="1.3" height="1.3" fill="#fbfbfb"/><rect x="5.5" y="103" width="1.5" height="1.5" fill="#77726f"/><rect x="3.3" y="106.8" width="1.3" height="1.3" fill="#fbfbfb"/><rect x="2.5" y="106" width="1.5" height="1.5" fill="#77726f"/><rect x="6.3" y="109.8" width="1.3" height="1.3" fill="#fbfbfb"/><rect x="5.5" y="109" width="1.5" height="1.5" fill="#77726f"/><rect x="3.3" y="112.8" width="1.3" height="1.3" fill="#fbfbfb"/><rect x="2.5" y="112" width="1.5" height="1.5" fill="#77726f"/>
<defs><linearGradient id="glf" x1="0" y1="0" x2="0" y2="1"><stop offset="0" stop-color="#2a70e0"/><stop offset="0.25" stop-color="#a0c8f0"/><stop offset="0.35" stop-color="#f0f0f0"/><stop offset="1" stop-color="#c8c8cc"/></linearGradient></defs>
<rect x="18.5" y="88.5" width="21" height="21" rx="2" fill="url(#glf)" stroke="#9a9a9e" stroke-width="0.8"/>
<path d="M20 95.5H37M20 98.5H37M20 101.5H31" stroke="#d4d4d8" stroke-width="1.4"/><path d="M20 99V108.5H31Z" fill="none" stroke="#a0a0a6" stroke-width="1.3"/>
<path d="M31 106.5L38 93" stroke="#c88010" stroke-width="4.6"/><path d="M31 106.5L38 93" stroke="#ffd030" stroke-width="3"/><path d="M29.5 109.5L30 105.5L33 107Z" fill="#e8c8a0" stroke="#a07040" stroke-width="0.5"/>
<path d="M48.5 91V108" stroke="#b5b0ad" stroke-width="1"/><path d="M49.5 91V108" stroke="#e2dfdd" stroke-width="1"/>
<path d="M77.5 89.5L69.5 97" stroke="#111" stroke-width="5.5"/><path d="M76 89.5L70.5 95" stroke="#666" stroke-width="0.8"/>
<path d="M67.5 95.5L72 100" stroke="#e0b030" stroke-width="2.2"/>
<path d="M66.5 97L71 101.5L59 109.5Z" fill="#e8b830" stroke="#8a6010" stroke-width="0.7" stroke-linejoin="round"/><path d="M59.5 109L65.5 102.5" stroke="#6a4a10" stroke-width="0.6"/>
<defs><linearGradient id="gra" x1="0" y1="0" x2="1" y2="1"><stop offset="0" stop-color="#d05050"/><stop offset="1" stop-color="#6a0808"/></linearGradient></defs><path d="M108.5 88L87.5 96L90 98L89 100.5L92.5 101L90.5 104L93 105L96 103L97 106.5L99 109L100 105.5L101.5 102L103 100.5L104.5 97L106 95Z" fill="url(#gra)" stroke="#7a1010" stroke-width="0.6" stroke-linejoin="round"/>
<path d="M117 97.5H122.6L119.8 100.5Z" fill="#111"/>
<rect x="136.3" y="90.6" width="78.2" height="17.3" rx="3.5" fill="#a9a4a1" opacity=".7"/><rect x="136.3" y="89.7" width="78.2" height="17.3" rx="3.5" fill="url(#gbtn)" stroke="#a9a4a1" stroke-width="1"/>
<rect x="140" y="93.2" width="58" height="11.5" fill="#fff"/><path d="M141 99H197" stroke="#111" stroke-width="1.6"/>
<path d="M201.8 96.3L205.8 100.3L209.8 96.3" fill="none" stroke="#222" stroke-width="1.5"/>
<rect x="225" y="88.7" width="73" height="20.3" fill="#fff"/>
<path d="M288.5 96L292.3 92L296.1 96M288.5 100L292.3 104L296.1 100" fill="none" stroke="#8c8886" stroke-width="1.3"/>
<rect x="308.1" y="90.6" width="88.5" height="17.3" rx="3.5" fill="#a9a4a1" opacity=".7"/><rect x="308.1" y="89.7" width="88.5" height="17.3" rx="3.5" fill="url(#gbtn)" stroke="#a9a4a1" stroke-width="1"/>
<rect x="313.3" y="93.7" width="30.2" height="10.3" fill="#3465b0" stroke="#1e2a40" stroke-width="1"/><rect x="350.5" y="93.7" width="3.2" height="10.3" fill="none" stroke="#111" stroke-width="1"/>
<path d="M383.5 96.3L387.5 100.3L391.5 96.3" fill="none" stroke="#222" stroke-width="1.5"/>
<circle cx="415.5" cy="91.8" r="1.5" fill="#30b0b0"/><circle cx="419.8" cy="89" r="1.6" fill="#3a60e0"/><circle cx="424.6" cy="89" r="1.6" fill="#9040c8"/><circle cx="428.6" cy="92" r="1.6" fill="#9030c0"/><circle cx="431" cy="96.5" r="1.6" fill="#d030c0"/><circle cx="413" cy="96.3" r="1.7" fill="#20c030"/><circle cx="413.2" cy="101" r="1.7" fill="#80e030"/><circle cx="432" cy="100.8" r="1.2" fill="#f07070"/>
<defs><linearGradient id="gbk" x1="0" y1="0" x2="1" y2="0.3"><stop offset="0" stop-color="#ffffff"/><stop offset="0.6" stop-color="#e8e8e8"/><stop offset="1" stop-color="#a8a8a8"/></linearGradient></defs>
<path d="M414.5 94.5C416 91 424 88 427 90L431 106C429 109 421 110 418.5 108Z" fill="url(#gbk)" stroke="#b0b0b0" stroke-width="0.5"/>
<path d="M415 95.5C417 93.5 421 93 423 94.5C420 96 417 96.5 415 95.5Z" fill="#b01010"/><path d="M415.6 95V104.5" stroke="#b01010" stroke-width="1.4"/><ellipse cx="415.5" cy="108.3" rx="4.6" ry="1.3" fill="#c01010"/>
<path d="M421.5 99.5L427.5 94.5L431 103L425.5 107Z" fill="#f0b818"/>
<rect x="448.4" y="90.6" width="71" height="17.3" rx="3.5" fill="#a9a4a1" opacity=".7"/><rect x="448.4" y="89.7" width="71" height="17.3" rx="3.5" fill="url(#gbtn)" stroke="#a9a4a1" stroke-width="1"/>
<path d="M506.2 96.3L510.2 100.3L514.2 96.3" fill="none" stroke="#222" stroke-width="1.5"/>
<rect x="524.1" y="90.6" width="109.5" height="17.3" rx="3.5" fill="#a9a4a1" opacity=".7"/><rect x="524.1" y="89.7" width="109.5" height="17.3" rx="3.5" fill="url(#gbtn)" stroke="#a9a4a1" stroke-width="1"/>
<rect x="529.5" y="93.7" width="30" height="10.3" fill="#729fcf" stroke="#1e2a40" stroke-width="1"/><rect x="566.5" y="93.7" width="3.2" height="10.3" fill="none" stroke="#111" stroke-width="1"/>
<path d="M620.5 96.3L624.5 100.3L628.5 96.3" fill="none" stroke="#222" stroke-width="1.5"/>
<rect x="653" y="88.2" width="19" height="19.8" rx="3.5" fill="url(#gblue2)" stroke="#1a5ad0" stroke-width="0.8"/><circle cx="668" cy="104" r="2.5" fill="#c0e8ff" opacity=".8"/>
<path d="M682.5 91V108" stroke="#b5b0ad" stroke-width="1"/><path d="M683.5 91V108" stroke="#e2dfdd" stroke-width="1"/>
<path d="M697.2 94A6.3 6.3 0 1 0 705.3 94.2" fill="none" stroke="#1a1a1a" stroke-width="3.8"/><path d="M697.2 94A6.3 6.3 0 1 0 705.3 94.2" fill="none" stroke="#fafafa" stroke-width="1.9"/>
<path d="M699.3 91.5H707.3L702.4 98.2Z" fill="#fafafa" stroke="#1a1a1a" stroke-width="1.1" stroke-linejoin="round"/>
<path d="M719.9 97.6H725.5L722.6999999999999 100.6Z" fill="#111"/>
<rect x="732" y="91.2" width="2" height="16" fill="#2a6ae8"/><rect x="735.5" y="93" width="12" height="4.5" fill="#f0f0f0" stroke="#aaa" stroke-width="0.7"/><rect x="735.5" y="101" width="8.5" height="4.5" fill="#f0f0f0" stroke="#aaa" stroke-width="0.7"/>
<path d="M755.5 97.6H761.1L758.3 100.6Z" fill="#111"/>
<rect x="770.5" y="89.5" width="10" height="10" fill="#eee" stroke="#aaa" stroke-width="0.7"/><rect x="774" y="93" width="10" height="10" fill="#8ab8f0" stroke="#4a7ad0" stroke-width="0.7"/><rect x="778.5" y="98" width="10" height="10" fill="#f4f4f4" stroke="#aaa" stroke-width="0.7" opacity=".9"/>
<path d="M798 97.6H803.6L800.8 100.6Z" fill="#111"/>
</svg>
<div class="t" style="left:227px;top:92px;font-size:12.3px;color:#1e1c1b">0,00cm</div>
<div class="t" style="left:452.5px;top:92px;font-size:12.3px;color:#1e1c1b">Color</div>
<svg class="a" style="left:0;top:0" width="969" height="740" viewBox="0 0 969 740">
<path d="M197.5 126.5L204.5 133.5M204.5 126.5L197.5 133.5" stroke="#3a3a3a" stroke-width="2.2"/>
<path d="M225 127.5H238M228.5 124V137" stroke="#111" stroke-width="1.2"/>
<path d="M213.5 381.5H216.5M213.5 412.5H216.5" stroke="#6a6664" stroke-width="1"/>
<path d="M214 389L216 387.5M214 392.5L216 391M214 396L216 394.5M214 399.5L216 398M214 403L216 401.5" stroke="#6a6664" stroke-width="0.8"/>
</svg>
<svg class="a" style="left:0;top:0" width="969" height="740" viewBox="0 0 969 740">
<defs>
<linearGradient id="gb3" x1="0" y1="0" x2="0.6" y2="1"><stop offset="0" stop-color="#9ad2ff"/><stop offset="0.55" stop-color="#3a8cf8"/><stop offset="1" stop-color="#1a64e0"/></linearGradient>
<linearGradient id="gb4" x1="0" y1="0" x2="1" y2="1"><stop offset="0" stop-color="#9ad0ff"/><stop offset="0.6" stop-color="#2a80f8"/><stop offset="1" stop-color="#1660e0"/></linearGradient>
</defs>
<rect x="3.3" y="680.8" width="1.3" height="1.3" fill="#fbfbfb"/><rect x="2.5" y="680" width="1.5" height="1.5" fill="#77726f"/><rect x="6.3" y="683.8" width="1.3" height="1.3" fill="#fbfbfb"/><rect x="5.5" y="683" width="1.5" height="1.5" fill="#77726f"/><rect x="3.3" y="686.8" width="1.3" height="1.3" fill="#fbfbfb"/><rect x="2.5" y="686" width="1.5" height="1.5" fill="#77726f"/><rect x="6.3" y="689.8" width="1.3" height="1.3" fill="#fbfbfb"/><rect x="5.5" y="689" width="1.5" height="1.5" fill="#77726f"/><rect x="3.3" y="692.8" width="1.3" height="1.3" fill="#fbfbfb"/><rect x="2.5" y="692" width="1.5" height="1.5" fill="#77726f"/><rect x="6.3" y="695.8" width="1.3" height="1.3" fill="#fbfbfb"/><rect x="5.5" y="695" width="1.5" height="1.5" fill="#77726f"/><rect x="3.3" y="698.8" width="1.3" height="1.3" fill="#fbfbfb"/><rect x="2.5" y="698" width="1.5" height="1.5" fill="#77726f"/><rect x="6.3" y="701.8" width="1.3" height="1.3" fill="#fbfbfb"/><rect x="5.5" y="701" width="1.5" height="1.5" fill="#77726f"/><rect x="3.3" y="704.8" width="1.3" height="1.3" fill="#fbfbfb"/><rect x="2.5" y="704" width="1.5" height="1.5" fill="#77726f"/><rect x="6.3" y="707.8" width="1.3" height="1.3" fill="#fbfbfb"/><rect x="5.5" y="707" width="1.5" height="1.5" fill="#77726f"/><rect x="3.3" y="710.8" width="1.3" height="1.3" fill="#fbfbfb"/><rect x="2.5" y="710" width="1.5" height="1.5" fill="#77726f"/>
<rect x="15.5" y="680.5" width="28" height="29.5" rx="3.5" fill="#c9c5c2" stroke="#b3aeab" stroke-width="1"/>
<path d="M24 684.5V700L27.5 697L30.5 703.5L33 702.3L30 696H34.5Z" fill="#f4f4f4" stroke="#222" stroke-width="1.1" stroke-linejoin="round"/>
<path d="M49.0 687V703" stroke="#b5b0ad" stroke-width="1"/><path d="M50.0 687V703" stroke="#e2dfdd" stroke-width="1"/>
<path d="M57.5 705.3L79 685" stroke="#111" stroke-width="1.6"/>
<path d="M88 695H104" stroke="#222" stroke-width="1.5"/><path d="M109.5 695L103 692V698Z" fill="#222"/>
<rect x="119.5" y="688.5" width="21.5" height="13" rx="1" fill="url(#gb3)" stroke="#0a40a0" stroke-width="1"/>
<ellipse cx="160.5" cy="695" rx="10.3" ry="6.8" fill="url(#gb3)" stroke="#0a40a0" stroke-width="1"/>
<text x="192" y="704" text-anchor="middle" font-family="Liberation Serif" font-size="25" fill="#222">T</text>
<path d="M211.5 687V703" stroke="#b5b0ad" stroke-width="1"/><path d="M212.5 687V703" stroke="#e2dfdd" stroke-width="1"/>
<defs><linearGradient id="gcv" x1="0" y1="0" x2="1" y2="1"><stop offset="0" stop-color="#1a70f0"/><stop offset="0.6" stop-color="#58a8f8"/><stop offset="1" stop-color="#d8f8ff"/></linearGradient></defs>
<path d="M241 692.6V706H223.5L219.3 699C218.5 697.5 219.5 696 222 695.5C228 694.5 236 694 241 692.6Z" fill="url(#gcv)"/>
<path d="M241 692.6C236 694 228 694.5 222 695.5C219.5 696 218.5 697.5 219.3 699L223.5 706" fill="none" stroke="#111" stroke-width="0.9"/>
<path d="M226.3 702.5L233 686" stroke="#d07a10" stroke-width="5"/><path d="M226.3 702.5L233 686" stroke="#ffd020" stroke-width="3.4"/><path d="M224 705.2L224.5 701L228 702.5Z" fill="#f0d8b0" stroke="#b08050" stroke-width="0.6"/>
<path d="M249 693.5H254.6L251.8 696.5Z" fill="#111"/>
<path d="M266 687H272.5V702.5H277" fill="none" stroke="#111" stroke-width="1.5"/><rect x="261.5" y="684.5" width="5.5" height="5.5" fill="#3a86f0" stroke="#1a50c0" stroke-width="0.8"/><rect x="277" y="699.5" width="5.5" height="5.5" fill="#3a86f0" stroke="#1a50c0" stroke-width="0.8"/>
<path d="M290.8 693.5H296.40000000000003L293.6 696.5Z" fill="#111"/>
<path d="M303.2 695H320" stroke="#333" stroke-width="1.5"/><path d="M325 695L319 692.5V697.5Z" fill="#333"/>
<path d="M333 693.5H338.6L335.8 696.5Z" fill="#111"/>
<rect x="346.2" y="685.6" width="13" height="13" fill="url(#gb3)" stroke="#0a50c0" stroke-width="0.8"/><circle cx="360.4" cy="694.9" r="6.4" fill="url(#gb3)" stroke="#0a50c0" stroke-width="0.8"/><path d="M346.2 703.3L352.8 690.5L359.5 703.3Z" fill="url(#gb3)" stroke="#0a50c0" stroke-width="0.8"/>
<path d="M375 693.5H380.6L377.8 696.5Z" fill="#111"/>
<circle cx="397.8" cy="695" r="10.6" fill="url(#gb3)" stroke="#0a40a0" stroke-width="0.9"/><circle cx="394.5" cy="691" r="1.3" fill="none" stroke="#0a40a0" stroke-width="0.8"/><circle cx="401" cy="691" r="1.3" fill="none" stroke="#0a40a0" stroke-width="0.8"/><path d="M392 697C394 701 401.5 701 403.5 697" fill="none" stroke="#0a40a0" stroke-width="0.9"/>
<path d="M417.2 693.5H422.8L420.0 696.5Z" fill="#111"/>
<path d="M429.5 695L436 688.5V692H444.5V688.5L451 695L444.5 701.5V698H436V701.5Z" fill="url(#gb3)" stroke="#0a40a0" stroke-width="0.9"/>
<path d="M459 693.5H464.6L461.8 696.5Z" fill="#111"/>
<rect x="471" y="684.5" width="21.5" height="21" fill="url(#gb3)" stroke="#0a40a0" stroke-width="1"/><path d="M471 688.5H492.5M475.5 684.5V705.5" stroke="#0a40a0" stroke-width="0.9"/>
<path d="M501.2 693.5H506.8L504.0 696.5Z" fill="#111"/>
<path d="M515.5 684.5H532C533.5 684.5 534.5 685.5 534.5 687V698C534.5 699.5 533.5 700.5 532 700.5H521.5L513.5 705.5L516.5 700.5H515.5C514 700.5 513 699.5 513 698V687C513 685.5 514 684.5 515.5 684.5Z" fill="url(#gb3)" stroke="#0a40a0" stroke-width="0.9"/>
<path d="M543 693.5H548.6L545.8 696.5Z" fill="#111"/>
<path d="M565.5 684.7L568.2 691.8L576 692.1L569.9 696.9L572 704.5L565.5 700.2L559 704.5L561.1 696.9L555 692.1L562.8 691.8Z" fill="url(#gb3)" stroke="#0a40a0" stroke-width="0.9"/>
<path d="M585.4 693.5H591.0L588.1999999999999 696.5Z" fill="#111"/>
<path d="M598.5 687V703" stroke="#b5b0ad" stroke-width="1"/><path d="M599.5 687V703" stroke="#e2dfdd" stroke-width="1"/>
<path d="M607 699C609 692 613 688 617 688C620 686 624 685 627 684.5" fill="none" stroke="#222" stroke-width="1.3"/><rect x="612" y="685.5" width="6" height="6" fill="#3a86f0" stroke="#1a50c0" stroke-width="0.7"/>
<path d="M616 690V703L619 700.5L621.5 705.5L623.5 704.5L621 699.5H625Z" fill="#f0f0f0" stroke="#222" stroke-width="0.9" stroke-linejoin="round"/>
<path d="M648 698L655 686.5" stroke="#c05a08" stroke-width="7.2" stroke-linecap="round"/><path d="M648 698L655 686.5" stroke="#f8a020" stroke-width="5.6" stroke-linecap="round"/><path d="M649.5 696L655.5 686.5" stroke="#ffd890" stroke-width="1.5" stroke-linecap="round"/>
<circle cx="645.5" cy="701.5" r="3.6" fill="#e8e8e8" stroke="#a0a0a0" stroke-width="0.9"/><circle cx="645.5" cy="701.5" r="1.4" fill="#b8b8b8"/>
<path d="M667.5 687V703" stroke="#b5b0ad" stroke-width="1"/><path d="M668.5 687V703" stroke="#e2dfdd" stroke-width="1"/>
<rect x="676.5" y="687" width="21.5" height="16.3" rx="3" fill="#f4f4f4" stroke="#a8b0c8" stroke-width="1"/><text x="687.3" y="701.5" text-anchor="middle" font-family="Liberation Sans" font-size="15" font-weight="bold" fill="#7a7a7a">A</text>
<circle cx="721.5" cy="691.5" r="5" fill="#e03020"/><rect x="710" y="685.5" width="7" height="7.5" fill="#30b030" stroke="#107010" stroke-width="0.6"/><circle cx="711.5" cy="699" r="4.5" fill="#60a8f0"/><rect x="714.5" y="694.5" width="12.5" height="10" fill="#fff" stroke="#1040b0" stroke-width="1"/><path d="M716.5 698H725M716.5 700.5H725M716.5 703H725" stroke="#1a60d0" stroke-width="1"/>
<path d="M736.5 687H744L746 689H758.5V704H736.5Z" fill="#5a9ae0" stroke="#3a78c8" stroke-width="0.6"/><rect x="740.5" y="691.5" width="13" height="10" fill="#4040a0"/><path d="M743 700C744 695 747 693 750 692" stroke="#e040a0" stroke-width="1.5" fill="none"/>
<path d="M766.5 687V703" stroke="#b5b0ad" stroke-width="1"/><path d="M767.5 687V703" stroke="#e2dfdd" stroke-width="1"/>
<path d="M780 685.5H795V700L792 704H778V690Z" fill="#c4c1bf" stroke="#b0adab" stroke-width="0.8"/><path d="M775.5 697L781 693V696H786V699H781V702Z" fill="#d4d1cf" stroke="#aaa7a5" stroke-width="0.8"/>
</svg>
</div></body></html>
